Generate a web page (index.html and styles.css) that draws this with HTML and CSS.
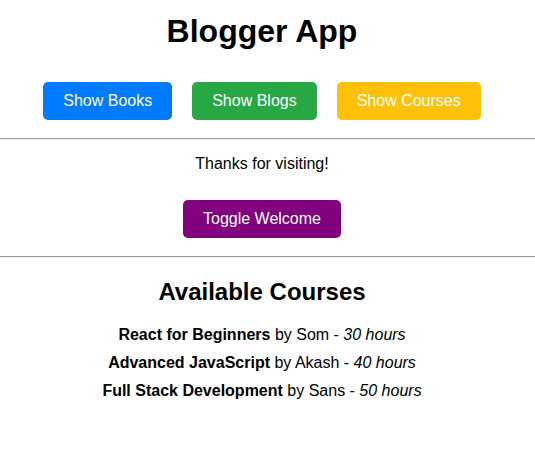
FILE: index.html
```html
<!DOCTYPE html>
<html>
<head>
<meta charset="utf-8">
<link rel="stylesheet" href="styles.css">
</head>
<body>
<div class="app">
  <section class="block">
    <h1 class="title">Blogger App</h1>
    <div class="btn-row">
      <button class="btn btn-blue">Show Books</button>
      <button class="btn btn-green">Show Blogs</button>
      <button class="btn btn-yellow">Show Courses</button>
    </div>
  </section>
  <hr class="divider">
  <section class="block">
    <p class="thanks">Thanks for visiting!</p>
    <button class="btn btn-purple">Toggle Welcome</button>
  </section>
  <hr class="divider">
  <section class="block">
    <h2 class="subtitle">Available Courses</h2>
    <p class="item"><strong>React for Beginners</strong> by Som - <em>30 hours</em></p>
    <p class="item"><strong>Advanced JavaScript</strong> by Akash - <em>40 hours</em></p>
    <p class="item"><strong>Full Stack Development</strong> by Sans - <em>50 hours</em></p>
  </section>
</div>
</body>
</html>
```

FILE: styles.css
```css
html, body {
  margin: 0;
  padding: 0;
  background: #ffffff;
}
body {
  font-family: "Liberation Sans", Arial, sans-serif;
  color: #000;
}
.app {
  display: flow-root;
}
.block {
  text-align: center;
  padding-right: 11px;
  display: flow-root;
}
.title {
  font-size: 32px;
  font-weight: bold;
  margin: 13px 0 22px;
}
.btn-row {
  display: flex;
  justify-content: center;
}
.btn {
  font-family: "Liberation Sans", Arial, sans-serif;
  font-size: 16px;
  color: #ffffff;
  border: none;
  border-radius: 5px;
  padding: 10px 20px;
  margin: 10px;
  cursor: pointer;
  line-height: normal;
}
.btn-blue { background: #007bff; }
.btn-green { background: #28a745; }
.btn-yellow { background: #ffc107; }
.btn-purple { background: #800080; }
.divider {
  margin: 8px 0;
  border: none;
  border-top: 1px solid #9a9a9a;
  border-bottom: 1px solid #eeeeee;
  height: 0;
}
.thanks {
  font-size: 16px;
  margin: 7px 0 17px;
}
.subtitle {
  font-size: 24px;
  font-weight: bold;
  margin: 12px 0 20px;
}
.item {
  font-size: 16px;
  margin: 10px 0;
}
```
